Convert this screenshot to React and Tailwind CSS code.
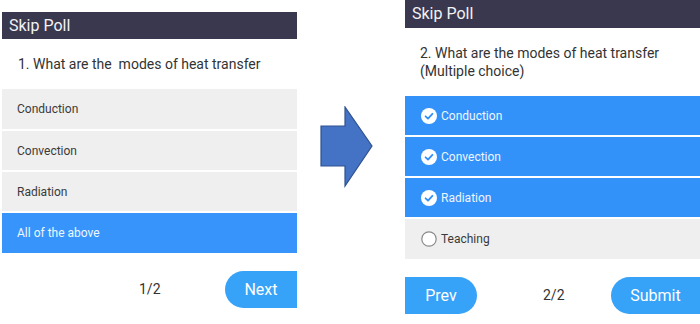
import React from "react";

const font = { fontFamily: "Roboto, 'Noto Sans', sans-serif" };

function Check() {
  return (
    <svg width="16" height="16" viewBox="0 0 16 16" className="shrink-0">
      <circle cx="8" cy="8" r="8" fill="#ffffff" />
      <path d="M4.6 8.3 L7 10.6 L11.4 5.8" fill="none" stroke="#3391fa" strokeWidth="1.8" strokeLinecap="round" strokeLinejoin="round" />
    </svg>
  );
}

function Radio() {
  return (
    <svg width="16" height="16" viewBox="0 0 16 16" className="shrink-0">
      <circle cx="8" cy="8" r="7.2" fill="#ffffff" stroke="#8a8a8a" strokeWidth="1.2" />
    </svg>
  );
}

function Arrow() {
  return (
    <svg width="54" height="82" viewBox="0 0 54 82" className="shrink-0">
      <polygon points="1,20 25,20 25,1 52,40 25,80 25,60 1,60" fill="#4472c4" stroke="#2f528f" strokeWidth="1.2" />
    </svg>
  );
}

export default function App() {
  return (
    <div className="w-[700px] h-[324px] bg-white flex items-start overflow-hidden" style={font}>
      {/* Left panel */}
      <div className="mt-[12px] ml-[2px] w-[295px] flex flex-col">
        <div className="h-[27px] bg-[#3a384f] text-[#f2f2f5] text-[16px] pl-[7px] flex items-center">Skip Poll</div>
        <div className="h-[50px] flex items-center pl-[16px] text-[14px] text-[#333333] whitespace-pre">1. What are the  modes of heat transfer</div>
        <div className="flex flex-col gap-[2px]">
          <div className="h-[40px] bg-[#efefef] flex items-center pl-[15px] text-[12px] text-[#3a3a3a]">Conduction</div>
          <div className="h-[39px] bg-[#efefef] flex items-center pl-[15px] text-[12px] text-[#3a3a3a]">Convection</div>
          <div className="h-[39px] bg-[#efefef] flex items-center pl-[15px] text-[12px] text-[#3a3a3a]">Radiation</div>
          <div className="h-[40px] bg-[#3694fb] flex items-center pl-[15px] text-[12px] text-[#eef6ff]">All of the above</div>
        </div>
        <div className="mt-[18px] flex items-center">
          <div className="w-[223px] pl-[137px] text-[14px] text-[#333333]">1/2</div>
          <div className="w-[72px] h-[37px] bg-[#36a2f8] rounded-l-full flex items-center justify-center text-white text-[16px]">Next</div>
        </div>
      </div>

      {/* Arrow */}
      <div className="ml-[23px] mt-[106px]">
        <Arrow />
      </div>

      {/* Right panel */}
      <div className="ml-[31px] w-[295px] flex flex-col">
        <div className="h-[28px] bg-[#3a384f] text-[#f2f2f5] text-[16px] pl-[7px] flex items-center">Skip Poll</div>
        <div className="h-[68px] flex flex-col justify-center pl-[15px] pb-[1px] text-[14px] leading-[18px] text-[#333333]">
          <div>2. What are the modes of heat transfer</div>
          <div>(Multiple choice)</div>
        </div>
        <div className="flex flex-col gap-[2px]">
          <div className="h-[39px] bg-[#3391fa] flex items-center gap-[4px] pl-[16px] text-[12px] text-[#eef6ff]"><Check />Conduction</div>
          <div className="h-[39px] bg-[#3391fa] flex items-center gap-[4px] pl-[16px] text-[12px] text-[#eef6ff]"><Check />Convection</div>
          <div className="h-[39px] bg-[#3391fa] flex items-center gap-[4px] pl-[16px] text-[12px] text-[#eef6ff]"><Check />Radiation</div>
          <div className="h-[40px] bg-[#efefef] flex items-center gap-[4px] pl-[16px] text-[12px] text-[#3a3a3a]"><Radio />Teaching</div>
        </div>
        <div className="mt-[18px] flex items-center">
          <div className="w-[72px] h-[37px] bg-[#36a2f8] rounded-r-full flex items-center justify-center text-white text-[16px]">Prev</div>
          <div className="flex-1 pl-[66px] text-[14px] text-[#333333]">2/2</div>
          <div className="w-[89px] h-[37px] bg-[#36a2f8] rounded-l-full flex items-center justify-center text-white text-[16px]">Submit</div>
        </div>
      </div>
    </div>
  );
}
